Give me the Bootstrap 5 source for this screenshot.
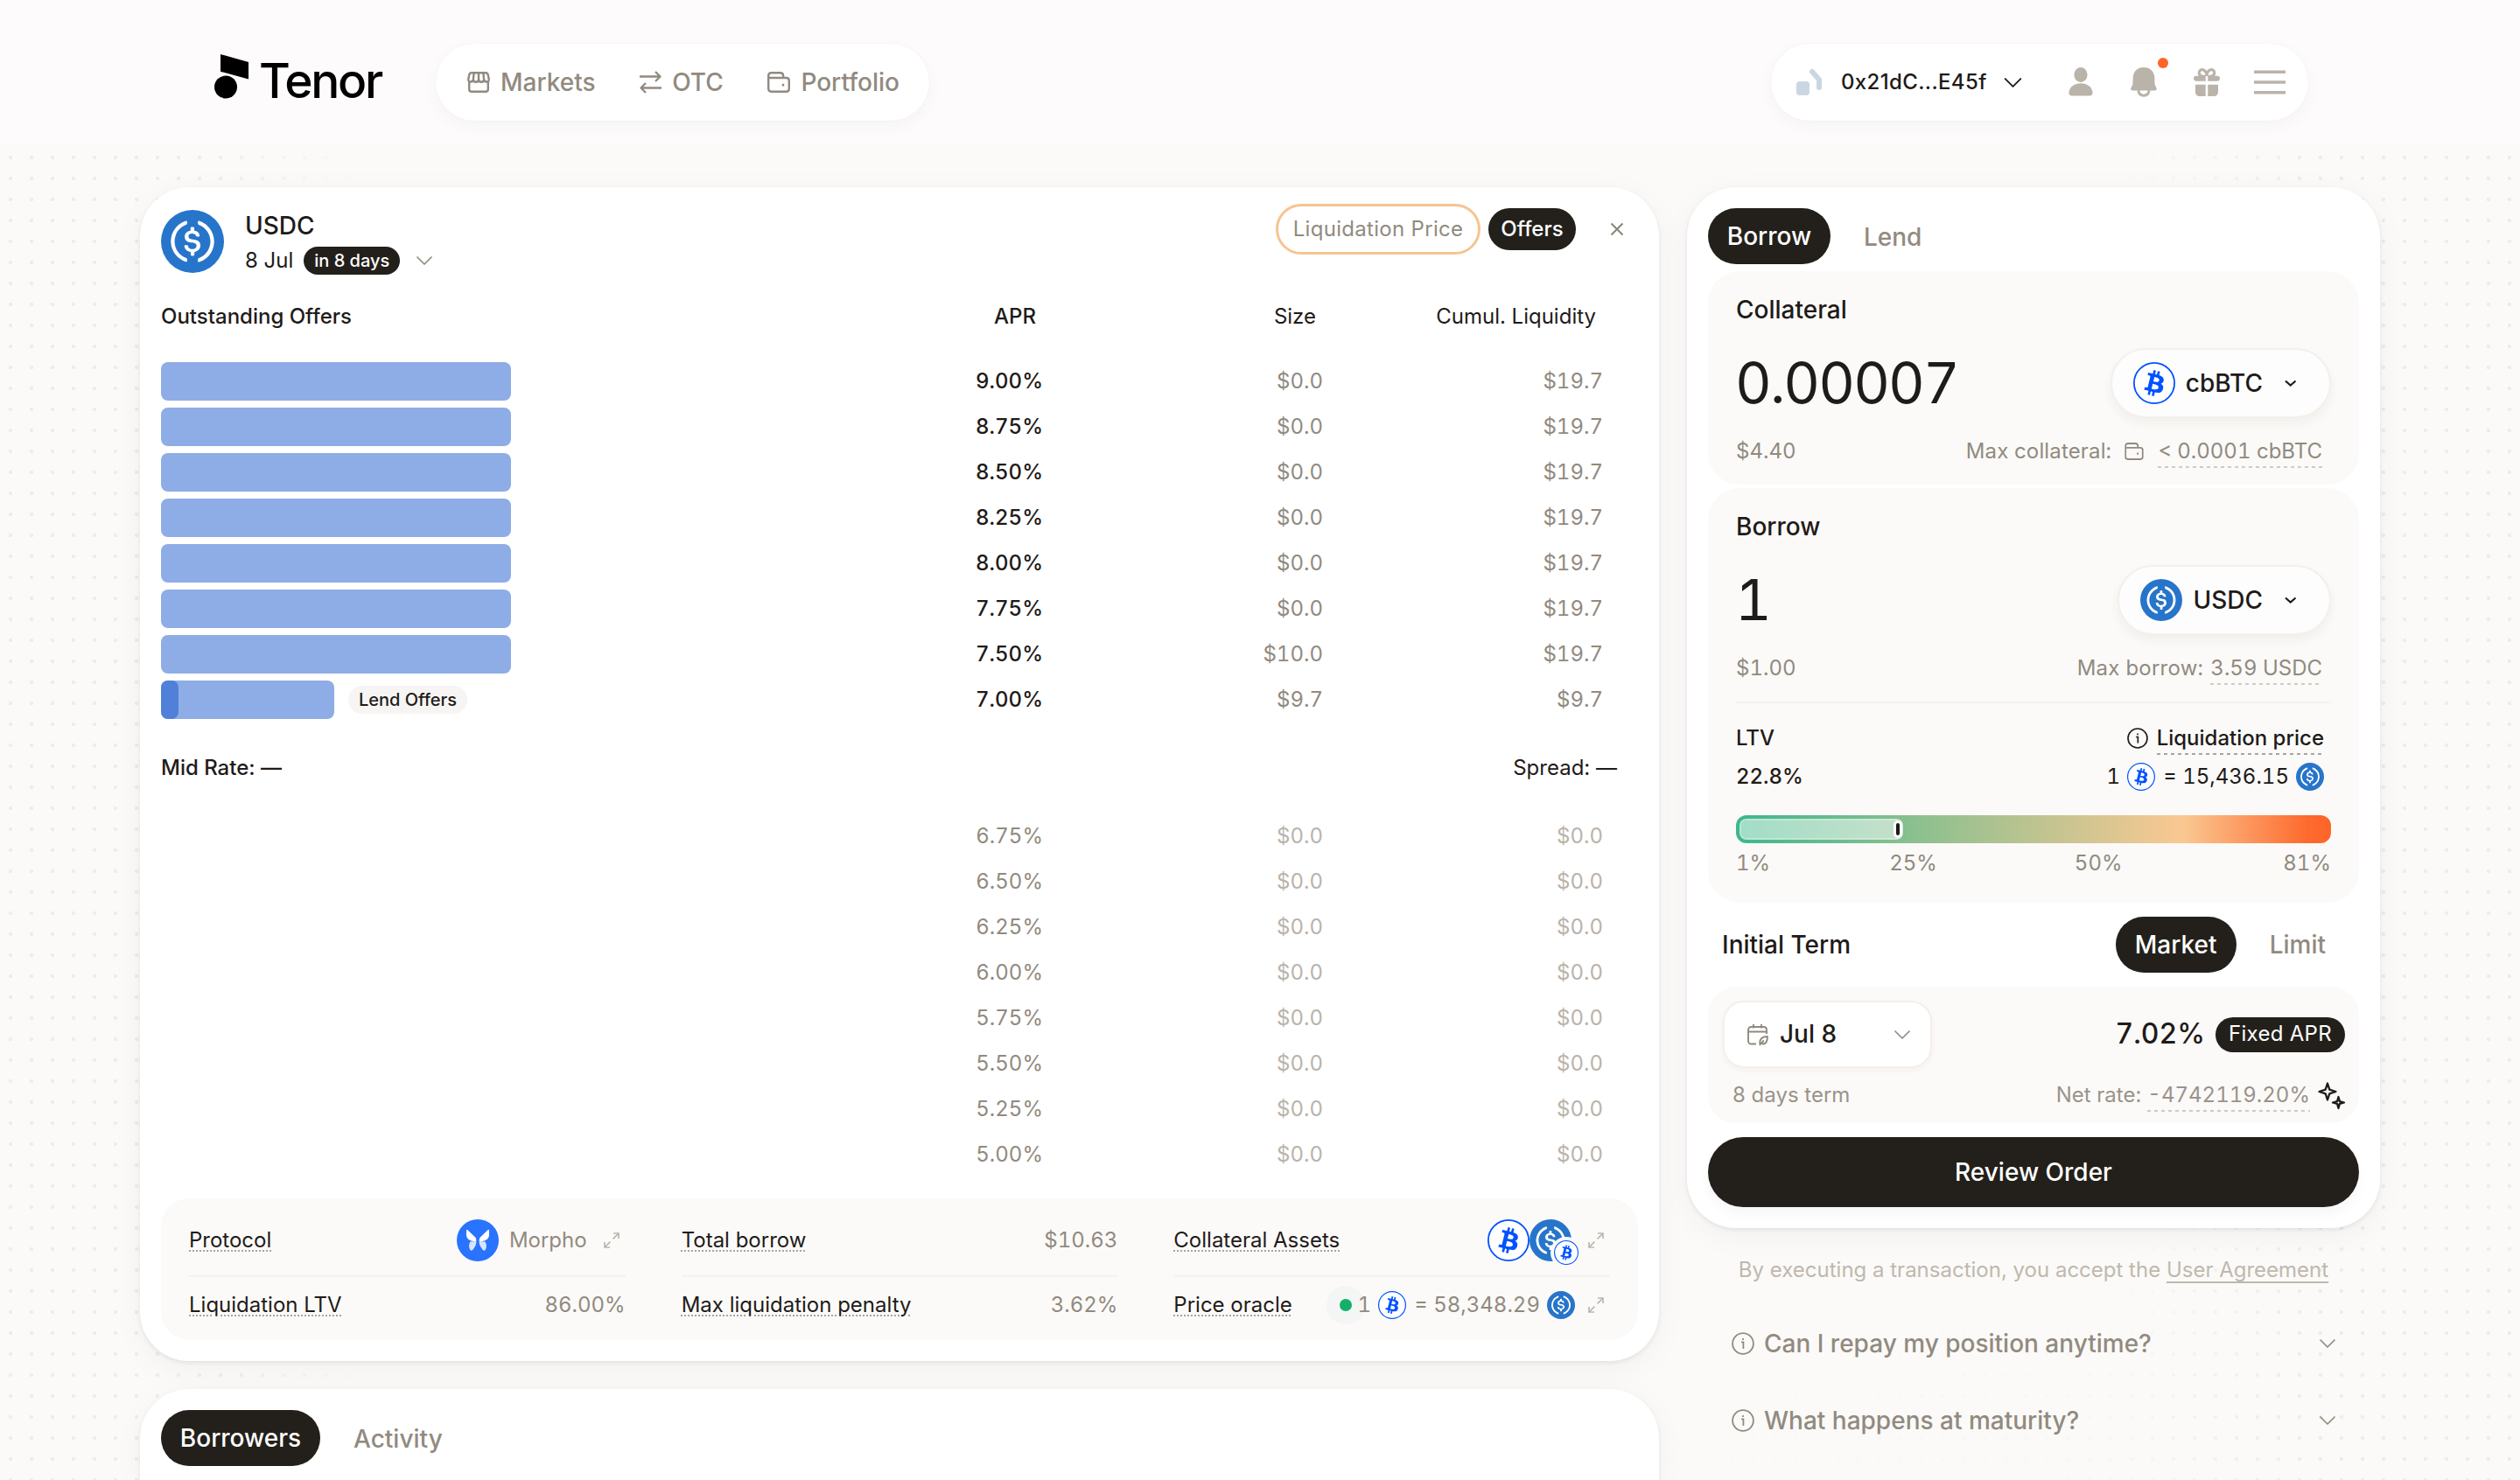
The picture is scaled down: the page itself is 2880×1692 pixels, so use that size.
<!DOCTYPE html>
<html lang="en">
<head>
<meta charset="utf-8">
<title>Tenor</title>
<link href="https://cdn.jsdelivr.net/npm/bootstrap@5.3.0/dist/css/bootstrap.min.css" rel="stylesheet">
<style>
:root{--ink:#1f1b19;--dark:#23201b;--muted:#918a80;--soft:#bab3aa;--panel:#fbfaf8}
html,body{height:1692px;overflow:hidden}
body{font-family:Inter,"Liberation Sans",sans-serif;font-size:24px;line-height:1.2;color:var(--ink);background:#fbfaf8;position:relative;white-space:nowrap}
svg{display:block;flex:none;overflow:visible}
.dots{position:absolute;inset:0;z-index:0;background:radial-gradient(circle at 12px 12px,#eeecea 1.7px,transparent 2.5px) 0 0/24px 24px;
 -webkit-mask-image:linear-gradient(90deg,#000 8.5%,transparent 14.5%,transparent 84%,#000 91.5%),radial-gradient(ellipse 1100px 300px at 100% 100%,#0007,transparent);mask-image:linear-gradient(90deg,#000 8.5%,transparent 14.5%,transparent 84%,#000 91.5%),radial-gradient(ellipse 1100px 300px at 100% 100%,#0007,transparent)}
.topbar{height:164px;background:#fdfbfc;padding:50px 242px 26px 245px;z-index:2}
.brand-word{font-size:55px;font-weight:550;letter-spacing:-2.300px;color:#000;line-height:85px;margin-left:11px;width:199px}
.cap-pill{height:88px;border-radius:44px;background:#fff;box-shadow:0 6px 20px rgba(40,20,20,.035),0 0 2px rgba(40,20,20,.05)}
.menu-pill{padding:0 34px 0 36px;width:564px;font-size:28px;font-weight:500;color:var(--muted)}
.menu-pill svg{stroke:var(--muted);fill:none;stroke-width:2.4}
.menu-pill .entry{gap:12px}
.user-pill{width:614px}
.shell{padding:50px 160px 0;gap:32px;z-index:1}
.sheet{background:#fff;border-radius:56px;padding:24px;box-shadow:0 2px 5px rgba(30,25,20,.08),0 8px 36px rgba(30,25,20,.045)}
.sheet.cut{height:104px;border-radius:56px 56px 0 0;padding-bottom:0}
.col-a{width:1736px}.col-b{width:792px}
.fs28{font-size:28px;font-weight:500}
.dn{padding-top:2px}
.muted{color:var(--muted)}
.dk{background:var(--dark);color:#fff}
.pill{display:flex;align-items:center;justify-content:center;border-radius:99px;font-weight:500}
.tab64{height:64px;font-size:28px;padding-top:2px}
.num{font-variant-numeric:tabular-nums}
.lh40{height:40px}
.liq-btn{height:58px;width:234px;border:3.5px solid #f7c492;font-weight:400;color:var(--muted);margin-top:-5px;letter-spacing:.3px}
.bk-head{height:86px;margin-bottom:6px;padding:2px 48px 0 0}
.bk{height:52px;padding-right:40px}
.c-apr{width:200px;text-align:right;font-weight:500}
.c-size{width:320px;text-align:right}.c-cum{width:320px;text-align:right}
.ask .c-size,.ask .c-cum{color:var(--muted)}
.bar-l{height:44px;border-radius:8px;background:#8eace6}
.bar-d{height:44px;width:20px;border-radius:8px;background:#5080d8}
.tag-l{width:136px;height:32px;background:#f6f5f3;font-size:20px;margin-left:16px}
.dim .c-apr{font-weight:400;color:var(--muted)}
.dim{color:var(--soft)}
.mid{height:104px;padding-right:24px}
.facts{margin-top:24px;background:var(--panel);border-radius:32px;padding:8px 32px;display:grid;grid-template-columns:repeat(3,1fr);column-gap:64px}
.fact{height:82px;border-bottom:2px solid #f3f2f0;display:flex;align-items:center;justify-content:space-between}
.fact.last{height:64px;border:0}
.dotu{text-decoration:underline dotted #aaa49b 2px;text-underline-offset:4px}
.fact .val{color:var(--muted);display:flex;align-items:center}
.mini{position:absolute;left:76px;top:24px;border-radius:50%;box-shadow:0 0 0 4px #fbfaf8;background:#fff}
.halo{width:44px;height:44px;border-radius:50%;background:#f3f6f4;display:flex;align-items:center;justify-content:center;margin-right:-8px}
.halo i{width:14px;height:14px;border-radius:50%;background:#14b069}
.box{background:var(--panel);border-radius:36px;padding:24px 32px 0}
.big{font-size:64.500px;line-height:81px;font-weight:400;height:78px;letter-spacing:-1.900px;margin-left:-1px}
.tok{height:80px;margin:0 0 -2px;border:2px solid #f4efec;border-radius:40px;background:#fdfdfd;box-shadow:0 6px 12px rgba(60,40,20,.05);padding:0 37px 0 24px}
.row78{height:78px;padding:2px 10px 0 0}
.dash{position:relative}
.dash:after{content:"";position:absolute;left:0;right:0;bottom:-5px;height:2px;background:repeating-linear-gradient(90deg,#cfcbc5 0 4px,transparent 4px 8px)}
.dash.k:after{background:repeating-linear-gradient(90deg,#a9a5a0 0 4px,transparent 4px 8px)}
.ltv-line{height:44px;padding-right:8px}
.grad{height:32px;border-radius:12px;margin-top:22px;padding:4px;background:linear-gradient(90deg,#3cb88c,#8bc08f 30%,#fac892 75%,#fe6a2e 96%,#fe6428)}
.fill{height:24px;border-radius:8px;border:2px solid rgba(255,255,255,.65);background:rgba(255,255,255,.52);background-clip:padding-box;display:flex;align-items:center;justify-content:flex-end}
.knob{width:10px;height:20px;border-radius:5px;border:3px solid #fff;background:#1f1b19;margin-right:-1px}
.scale{height:46px;align-items:center;color:var(--muted);padding-top:1px}
.term{height:96px;padding:0 38px 0 16px}
.box3{height:156px;border-radius:32px;padding:16px 16px 0 17px}
.date{width:239px;height:77px;border:2px solid #f4efec;border-radius:24px;background:#fff;box-shadow:0 3px 6px rgba(60,40,20,.04);padding:0 23px 0 26px}
.review{height:80px;margin-top:16px;font-size:28px;width:100%;border-radius:40px;padding-top:2px;box-shadow:0 8px 14px rgba(30,25,20,.04)}
.legal{margin-top:8px;height:80px;color:#bfb8ae;text-align:center;line-height:80px}
.legal a{color:inherit;text-decoration:underline 2px;text-underline-offset:5px}
.faq{height:88px;padding:0 51px;color:var(--muted)}
.pin{position:absolute;left:430px;top:16px}
</style>
<script src="https://cdn.jsdelivr.net/npm/bootstrap@5.3.0/dist/js/bootstrap.bundle.min.js"></script>
</head>
<body>
<svg width="0" height="0" class="position-absolute">
<symbol id="usdc" viewBox="0 0 32 32"><circle cx="16" cy="16" r="16" fill="#2775ca"/><g fill="#fff"><path d="M20.022 18.124c0-2.124-1.28-2.852-3.84-3.156-1.828-.243-2.193-.728-2.193-1.578 0-.85.61-1.396 1.828-1.396 1.097 0 1.707.364 2.011 1.275a.458.458 0 00.427.303h.975a.416.416 0 00.427-.425v-.06a3.04 3.04 0 00-2.743-2.489V9.142c0-.243-.183-.425-.487-.486h-.915c-.243 0-.426.182-.487.486v1.396c-1.829.242-2.986 1.456-2.986 2.974 0 2.002 1.218 2.791 3.778 3.095 1.707.303 2.255.668 2.255 1.639 0 .97-.853 1.638-2.011 1.638-1.585 0-2.133-.667-2.316-1.578-.06-.242-.244-.364-.427-.364h-1.036a.416.416 0 00-.426.425v.06c.243 1.518 1.219 2.61 3.23 2.914v1.457c0 .242.183.425.487.485h.915c.243 0 .426-.182.487-.485V21.34c1.829-.303 3.047-1.578 3.047-3.217z"/><path d="M12.892 24.497c-4.754-1.7-7.192-6.98-5.424-11.653.914-2.55 2.925-4.491 5.424-5.402.244-.121.365-.303.365-.607v-.85c0-.242-.121-.424-.365-.485-.061 0-.183 0-.244.06a10.895 10.895 0 00-7.13 13.717c1.096 3.4 3.717 6.01 7.13 7.102.244.121.488 0 .548-.243.061-.06.061-.122.061-.243v-.85c0-.182-.182-.424-.365-.546zm6.46-18.936c-.244-.122-.488 0-.548.242-.061.061-.061.122-.061.243v.85c0 .243.182.485.365.607 4.754 1.7 7.192 6.98 5.424 11.653-.914 2.55-2.925 4.491-5.424 5.402-.244.121-.365.303-.365.607v.85c0 .242.121.424.365.485.061 0 .183 0 .244-.06a10.895 10.895 0 007.13-13.717c-1.096-3.46-3.778-6.07-7.13-7.162z"/></g></symbol>
<symbol id="btc" viewBox="0 0 32 32"><circle cx="16" cy="16" r="15.4" fill="#fff" stroke="#0052ff" stroke-width="1.2"/><path fill="#0052ff" d="M23.189 14.02c.314-2.096-1.283-3.223-3.465-3.975l.708-2.84-1.728-.43-.69 2.765c-.454-.114-.92-.22-1.385-.326l.695-2.783L15.596 6l-.708 2.839c-.376-.086-.746-.17-1.104-.26l.002-.009-2.384-.595-.46 1.846s1.283.294 1.256.312c.7.175.826.638.805 1.006l-.806 3.235c.048.012.11.03.18.057l-.183-.045-1.13 4.532c-.086.212-.303.531-.793.41.018.025-1.256-.313-1.256-.313l-.858 1.978 2.25.561c.418.105.828.215 1.231.318l-.715 2.872 1.727.43.708-2.84c.472.127.93.245 1.378.357l-.706 2.828 1.728.43.715-2.866c2.948.558 5.164.333 6.097-2.333.752-2.146-.037-3.385-1.588-4.192 1.13-.26 1.98-1.003 2.207-2.538zm-3.95 5.538c-.533 2.147-4.148.986-5.32.695l.95-3.805c1.172.293 4.929.872 4.37 3.11zm.535-5.569c-.487 1.953-3.495.96-4.47.717l.86-3.45c.975.243 4.118.696 3.61 2.733z"/></symbol>
<symbol id="expand" viewBox="0 0 18 18"><path fill="none" stroke="#bdb6ad" stroke-width="1.7" d="M11 1h6v6M17 1l-6.4 6.4M7 17H1v-6M1 17l6.4-6.4"/></symbol>
<symbol id="chev" viewBox="0 0 18 10"><path fill="none" stroke="currentColor" stroke-width="1.7" stroke-linecap="round" stroke-linejoin="round" d="M1 1l8 8 8-8"/></symbol>
<symbol id="info" viewBox="0 0 26 26"><circle cx="13" cy="13" r="11.9" fill="none" stroke="currentColor" stroke-width="1.8"/><path fill="none" stroke="currentColor" stroke-width="1.8" d="M11 11.4h2.4V19M13 7v2"/></symbol>
<symbol id="wallet" viewBox="0 0 26 24"><path fill="none" stroke-linejoin="round" d="M1.200 9V4.600C1.200 2.500 2.600 1.200 4.600 1.200H14.500c2.200 0 3.600 1.300 3.600 3.200V7M1.200 7h20.400c2 0 3.200 1.200 3.200 3.200v9.400c0 2-1.200 3.200-3.200 3.200H4.600c-2 0-3.400-1.200-3.400-3.200V9M18 13.800v2.800"/></symbol>
</svg>
<div class="dots"></div>

<header class="topbar position-relative d-flex justify-content-between">
 <div class="d-flex">
  <svg width="40" height="50" viewBox="0 0 40 50" style="margin-top:12px"><path d="M7 0l32 9v19.500L7 19.800z"/><circle cx="13" cy="37.500" r="13"/></svg>
  <span class="brand-word">Tenor</span>
  <nav class="cap-pill menu-pill d-flex align-items-center justify-content-between" style="margin-left:3px">
   <span class="entry d-flex align-items-center"><svg width="26" height="24" viewBox="0 0 26 24"><path d="M2.200 11.500V20c0 1.700 1 2.700 2.700 2.700h16.200c1.700 0 2.700-1 2.700-2.700v-8.500M5 1.200h16c1.600 0 2.400.8 2.700 2.300l1 4.700c.3 2-.6 3.300-2.500 3.300s-3.100-1.200-3.100-3c0 1.800-1.100 3.300-3.100 3.300s-3-1.500-3-3.300c0 1.800-1 3.300-3 3.300s-3.100-1.500-3.100-3.300c0 1.800-1.200 3-3.100 3S1 10.200 1.300 8.200l1-4.700C2.600 2 3.400 1.200 5 1.200zM7.700 1.200L6.900 8.500M18.300 1.200l.8 7.300M13 1.200v7.300"/></svg><span class="dn">Markets</span></span>
   <span class="entry d-flex align-items-center"><svg width="25" height="26" viewBox="0 0 25 26"><path stroke-linejoin="round" d="M0 6.500h23.500M18 1l5.500 5.500L18 12M25 19.500H1.500M7 14l-5.500 5.500L7 25"/></svg><span class="dn">OTC</span></span>
   <span class="entry d-flex align-items-center"><svg width="26" height="24"><use href="#wallet"/></svg><span class="dn">Portfolio</span></span>
  </nav>
 </div>
 <div class="cap-pill user-pill position-relative d-flex align-items-center">
  <svg width="32" height="32" viewBox="0 0 32 32" style="margin-left:28px"><g fill="#ccd5e2"><rect x="1" y="15" width="15" height="16" rx="4"/></g><path d="M19 4l8 9v9" fill="none" stroke="#ccd5e2" stroke-width="6" stroke-linecap="round" stroke-linejoin="round"/></svg>
  <span style="margin-left:20px;font-weight:500;letter-spacing:.35px">0x21dC...E45f</span>
  <svg width="21" height="11" style="margin-left:19px"><use href="#chev"/></svg>
  <svg class="ms-auto" width="28" height="34" viewBox="0 0 28 34" fill="#bab3aa"><ellipse cx="14" cy="8.500" rx="7.600" ry="8.500"/><path d="M0.500 28C1.500 22 7 18.200 14 18.200S26.500 22 27.500 28c.3 2.800-.8 4.500-3.500 4.500H4C1.300 32.500.2 30.800.5 28z"/></svg>
  <svg width="30" height="34" viewBox="0 0 30 34" style="margin-left:43px"><path fill="#bab3aa" d="M15 0c7 0 12 4.600 12.300 11.300L27.500 18c.1 1.700.6 3 1.500 4.400 1.600 2.600.7 4.100-2 4.100H3c-2.700 0-3.600-1.500-2-4.100.9-1.400 1.400-2.700 1.500-4.400l.2-6.700C3 4.600 8 0 15 0z"/><path fill="none" stroke="#bab3aa" stroke-width="3" d="M8.800 26c.5 4 3 6.200 6.200 6.200s5.700-2.200 6.200-6.200"/></svg>
  <svg width="30" height="33" viewBox="0 0 30 33" style="margin-left:42px"><g fill="#bab3aa"><path d="M3 8.800h24c1.800 0 3 1 3 2.800s-1.200 3.200-3 3.200H3c-1.800 0-3-1.400-3-3.200s1.200-2.800 3-2.800zM2 18.800h11.700V32H7c-3 0-5-2-5-5zM16.300 18.800H28V27c0 3-2 5-5 5h-6.700z"/></g><path fill="none" stroke="#bab3aa" stroke-width="3.200" d="M14.500 9.500C9 10 6.200 8 6.300 5.200c.1-2.400 2.200-4 4.400-3.500 2.800.6 4.200 3.600 4.300 7.800.1-4.200 1.500-7.200 4.300-7.800 2.200-.5 4.300 1.100 4.400 3.500.1 2.800-2.700 4.800-8.200 4.300z"/><path stroke="#fff" stroke-width="2.600" d="M15 9v6"/></svg>
  <svg width="36" height="28" viewBox="0 0 36 28" style="margin:0 26px 0 39px"><path stroke="#bab3aa" stroke-width="3.400" d="M0 2.200h36M0 14h36M0 25.800h36"/></svg>
  <svg class="pin" width="36" height="12" viewBox="0 0 36 12"><circle cx="18" cy="6" r="6" fill="#ff6428"/></svg>
 </div>
</header>

<main class="shell position-relative d-flex align-items-start">
 <div class="col-a d-flex flex-column" style="gap:32px">
  <section class="sheet">
   <div class="d-flex align-items-start" style="height:80px">
    <svg width="72" height="72" style="margin:2px 24px 0 0"><use href="#usdc"/></svg>
    <div>
     <div class="lh40 fs28 dn d-flex align-items-center">USDC</div>
     <div class="lh40 d-flex align-items-center"><span>8 Jul</span><span class="pill dk" style="width:110px;height:32px;font-size:20px;margin:0 19px 0 12px">in 8 days</span><svg class="muted" width="18" height="10"><use href="#chev"/></svg></div>
    </div>
    <div class="ms-auto d-flex">
     <span class="pill liq-btn">Liquidation Price</span>
     <span class="pill dk" style="width:100px;height:48px;margin-left:9px">Offers</span>
     <svg width="14" height="14" viewBox="0 0 14 14" style="margin:17px 17px 0 40px"><path stroke="#8a8379" stroke-width="2" d="M.500.500l13 13M13.500.500l-13 13"/></svg>
    </div>
   </div>
   <div class="bk-head d-flex align-items-center"><span class="me-auto" style="font-weight:500">Outstanding Offers</span><span class="c-apr">APR</span><span class="c-size">Size</span><span class="c-cum">Cumul. Liquidity</span></div>
   <div id="asks" class="num"></div>
   <div class="mid d-flex align-items-center justify-content-between"><span style="font-weight:500">Mid Rate: —</span><span>Spread: —</span></div>
   <div id="bids" class="num"></div>
   <div class="facts">
    <div class="fact"><span class="dotu">Protocol</span><span class="val"><svg width="48" height="48" viewBox="0 0 48 48"><circle cx="24" cy="24" r="24" fill="#2973ff"/><path fill="#fff" d="M11 12.500c0-1 1-1 1.600-.3l8.500 8.300c1 1 1.300 2 1.200 4.500-4 .5-11.300-1-11.300-7zM37 12.500c0-1-1-1-1.600-.3l-8.500 8.300c-1 1-1.300 2-1.200 4.500 4 .5 11.300-1 11.300-7z"/><path fill="#d8e5ff" d="M22.300 25c.3 3-1 6-3.300 9-1 1.600-2.600 2.400-3.800.8-1.600-2.600-1.600-6.300.3-9.200zM25.700 25c-.3 3 1 6 3.300 9 1 1.600 2.600 2.400 3.800.8 1.600-2.600 1.600-6.300-.3-9.200z"/></svg><span style="margin:0 19px 0 12px">Morpho</span><svg width="18" height="18" style="margin-right:7px"><use href="#expand"/></svg></span></div>
    <div class="fact"><span class="dotu">Total borrow</span><span class="val num">$10.63</span></div>
    <div class="fact"><span class="dotu">Collateral Assets</span><span class="val position-relative"><svg width="48" height="48"><use href="#btc"/></svg><svg width="48" height="48"><use href="#usdc"/></svg><svg class="mini" width="28" height="28"><use href="#btc"/></svg><svg width="18" height="18" style="margin:0 7px 0 19px"><use href="#expand"/></svg></span></div>
    <div class="fact last"><span class="dotu">Liquidation LTV</span><span class="val num">86.00%</span></div>
    <div class="fact last"><span class="dotu">Max liquidation penalty</span><span class="val num">3.62%</span></div>
    <div class="fact last"><span class="dotu">Price oracle</span><span class="val num"><span class="halo"><i></i></span>1<svg width="32" height="32" style="margin:0 9px 0 8px"><use href="#btc"/></svg>= 58,348.29<svg width="32" height="32" style="margin:0 15px 0 8px"><use href="#usdc"/></svg><svg width="18" height="18" style="margin-right:7px"><use href="#expand"/></svg></span></div>
   </div>
  </section>
  <section class="sheet cut d-flex">
   <span class="pill dk tab64" style="width:182px">Borrowers</span>
   <span class="fs28 muted" style="line-height:66px;margin-left:38px">Activity</span>
  </section>
 </div>

 <aside class="col-b">
  <section class="sheet">
   <div class="d-flex" style="margin-bottom:8px;height:64px"><span class="pill dk tab64" style="width:140px">Borrow</span><span class="fs28 muted" style="line-height:66px;margin-left:38px">Lend</span></div>
   <div class="box" style="margin-bottom:4px">
    <div class="lh40 fs28 dn d-flex align-items-center" style="margin-bottom:24px">Collateral</div>
    <div class="d-flex justify-content-between"><span class="big num">0.00007</span><span class="tok d-flex align-items-center fs28"><svg width="48" height="48" style="margin-right:12px"><use href="#btc"/></svg><span class="dn">cbBTC</span><svg width="14" height="8" style="margin-left:25px"><path d="M1 1.500l5.700 5L12.500 1.500" fill="none" stroke="#1f1b19" stroke-width="2.200"/></svg></span></div>
    <div class="row78 d-flex align-items-center muted num"><span class="me-auto">$4.40</span><span style="letter-spacing:.15px">Max collateral:</span><svg width="22" height="20" viewBox="0 0 26 24" style="margin:0 16px 0 15px;stroke:#918a80;stroke-width:2.200"><use href="#wallet"/></svg><span class="dash">&lt; 0.0001 cbBTC</span></div>
   </div>
   <div class="box" style="height:474px">
    <div class="lh40 fs28 dn d-flex align-items-center" style="margin-bottom:24px">Borrow</div>
    <div class="d-flex justify-content-between"><span class="big num">1</span><span class="tok d-flex align-items-center fs28"><svg width="48" height="48" style="margin-right:12px"><use href="#usdc"/></svg><span class="dn">USDC</span><svg width="14" height="8" style="margin-left:25px"><path d="M1 1.500l5.700 5L12.500 1.500" fill="none" stroke="#1f1b19" stroke-width="2.200"/></svg></span></div>
    <div class="row78 d-flex align-items-center muted num"><span class="me-auto">$1.00</span><span style="letter-spacing:.25px">Max borrow:</span><span class="dash" style="margin-left:8px">3.59 USDC</span></div>
    <div style="border-top:2px solid #f3f2f0;padding-top:18px">
     <div class="ltv-line d-flex align-items-center"><span class="me-auto" style="font-weight:500">LTV</span><svg width="24" height="24"><use href="#info"/></svg><span class="dash k" style="margin-left:10px;font-weight:500">Liquidation price</span></div>
     <div class="ltv-line d-flex align-items-center num"><span class="me-auto" style="font-weight:500">22.8%</span>1<svg width="32" height="32" style="margin:0 9px 0 8px"><use href="#btc"/></svg>= 15,436.15<svg width="32" height="32" style="margin-left:8px"><use href="#usdc"/></svg></div>
     <div class="grad"><div class="fill" style="width:187px"><span class="knob"></span></div></div>
     <div class="scale d-flex num"><span>1%</span><span style="margin-left:136px">25%</span><span style="margin-left:157px">50%</span><span class="ms-auto">81%</span></div>
    </div>
   </div>
   <div class="term d-flex align-items-center fs28"><span class="me-auto dn">Initial Term</span><span class="pill dk tab64" style="width:138px">Market</span><span class="muted dn" style="margin-left:38px">Limit</span></div>
   <div class="box box3">
    <div class="d-flex align-items-center">
     <div class="date d-flex align-items-center fs28"><svg width="24" height="24" viewBox="0 0 24 24" fill="none" stroke="#918a80" stroke-width="1.900"><path d="M10 22.500H4.500C2.400 22.500 1 21.200 1 19V6.500C1 4.400 2.400 3 4.500 3h14C20.600 3 22 4.400 22 6.500V11M1 8.500h21M7 0v4.500M16 0v4.500M14.500 22.500c-1-4.500 1.500-8.500 8.300-8.500.6 5.600-2 9.500-6.300 8.200M13.800 23.800l5-5.300"/></svg><span style="margin-left:13px">Jul 8</span><svg class="ms-auto muted" width="18" height="10"><use href="#chev"/></svg></div>
     <span class="ms-auto num" style="font-size:32px;font-weight:500">7.02%</span><span class="pill dk" style="width:148px;height:40px;margin-left:12px;font-weight:400;letter-spacing:.3px">Fixed APR</span>
    </div>
    <div class="d-flex align-items-center" style="height:62px;color:#9a938a"><span class="me-auto" style="margin-left:11px">8 days term</span><span>Net rate:</span><span class="dash num" style="margin:0 9px 0 7px">-4742119.20%</span><svg width="31" height="31" viewBox="0 0 31 31" fill="none" stroke="#1f1b19" stroke-width="2.300" stroke-linejoin="round"><path d="M11 1.500l2.300 7.200 7.200 2.300-7.200 2.300L11 20.500l-2.300-7.200L1.500 11l7.200-2.300zM23.500 17l1.400 5.100 5.100 1.400-5.100 1.400-1.400 5.100-1.400-5.100-5.100-1.400 5.100-1.400z"/></svg></div>
   </div>
   <div class="pill dk review">Review Order</div>
  </section>
  <div class="legal">By executing a transaction, you accept the <a href="#">User Agreement</a></div>
  <div class="faq d-flex align-items-center fs28"><svg width="26" height="26" style="margin-right:11px"><use href="#info"/></svg><span class="dn">Can I repay my position anytime?</span><svg class="ms-auto" width="18" height="10"><use href="#chev"/></svg></div>
  <div class="faq d-flex align-items-center fs28"><svg width="26" height="26" style="margin-right:11px"><use href="#info"/></svg><span class="dn">What happens at maturity?</span><svg class="ms-auto" width="18" height="10"><use href="#chev"/></svg></div>
 </aside>
</main>
<script>
const asks=[['9.00','0.0','19.7'],['8.75','0.0','19.7'],['8.50','0.0','19.7'],['8.25','0.0','19.7'],['8.00','0.0','19.7'],['7.75','0.0','19.7'],['7.50','10.0','19.7'],['7.00','9.7','9.7']];
const bids=['6.75','6.50','6.25','6.00','5.75','5.50','5.25','5.00'].map(r=>[r,'0.0','0.0']);
const line=([a,s,c],bar,cls)=>`<div class="bk d-flex align-items-center ${cls}"><div class="me-auto d-flex align-items-center">${bar}</div><span class="c-apr">${a}%</span><span class="c-size">$${s}</span><span class="c-cum">$${c}</span></div>`;
document.getElementById('asks').innerHTML=asks.map((r,i)=>i<7
 ?line(r,'<div class="bar-l" style="width:400px"></div>','ask')
 :line(r,'<div class="bar-l" style="width:198px"><div class="bar-d"></div></div><span class="pill tag-l">Lend Offers</span>','ask')).join('');
document.getElementById('bids').innerHTML=bids.map(r=>line(r,'','dim')).join('');
</script>
</body>
</html>
